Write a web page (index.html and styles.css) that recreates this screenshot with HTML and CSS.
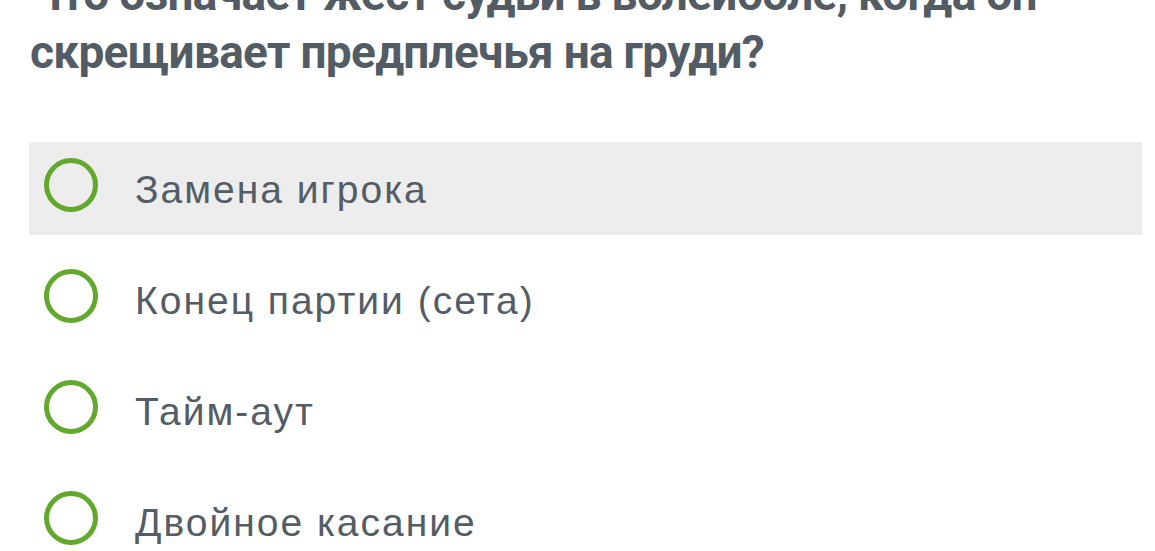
FILE: index.html
```html
<!DOCTYPE html>
<html lang="ru">
<head>
  <meta charset="UTF-8">
  <title>Тест по волейболу</title>
  <meta name="viewport" content="width=device-width, initial-scale=1.0" />
  <link rel="stylesheet" href="styles.css">
</head>
<body>

  <div class="quiz">
    <h2 class="question">Что означает жест судьи в волейболе, когда он<br>скрещивает предплечья на груди?</h2>

    <ul class="answers">
      <li class="answer selected">
        <span class="radio"></span>
        <span class="label">Замена игрока</span>
      </li>
      <li class="answer">
        <span class="radio"></span>
        <span class="label">Конец партии (сета)</span>
      </li>
      <li class="answer">
        <span class="radio"></span>
        <span class="label">Тайм-аут</span>
      </li>
      <li class="answer">
        <span class="radio"></span>
        <span class="label">Двойное касание</span>
      </li>
    </ul>
  </div>

</body>
</html>
```
FILE: styles.css
```css
body {
  margin: 0;
  background-color: #ffffff;
  font-family: 'Liberation Sans', Arial, sans-serif;
  color: #545d66;
  overflow: hidden;
}

.quiz {
  padding: 0 13px 0 29px;
}

.question {
  margin: -35px 0 61px 1px;
  font-family: Roboto, 'Liberation Sans', sans-serif;
  font-size: 46px;
  line-height: 58px;
  letter-spacing: -0.7px;
  font-weight: bold;
  color: #535c65;
  white-space: nowrap;
}

.answers {
  list-style: none;
  margin: 0;
  padding: 0;
}

.answer {
  display: flex;
  align-items: center;
  height: 93px;
  margin-bottom: 18px;
  padding-left: 15px;
}

.answer.selected {
  background-color: #ededed;
}

.radio {
  flex: none;
  width: 44px;
  height: 44px;
  border: 5px solid #62a82c;
  border-radius: 50%;
  margin-top: -7px;
}

.label {
  margin-left: 37px;
  margin-top: 2px;
  font-size: 39px;
  letter-spacing: 2px;
}
```
